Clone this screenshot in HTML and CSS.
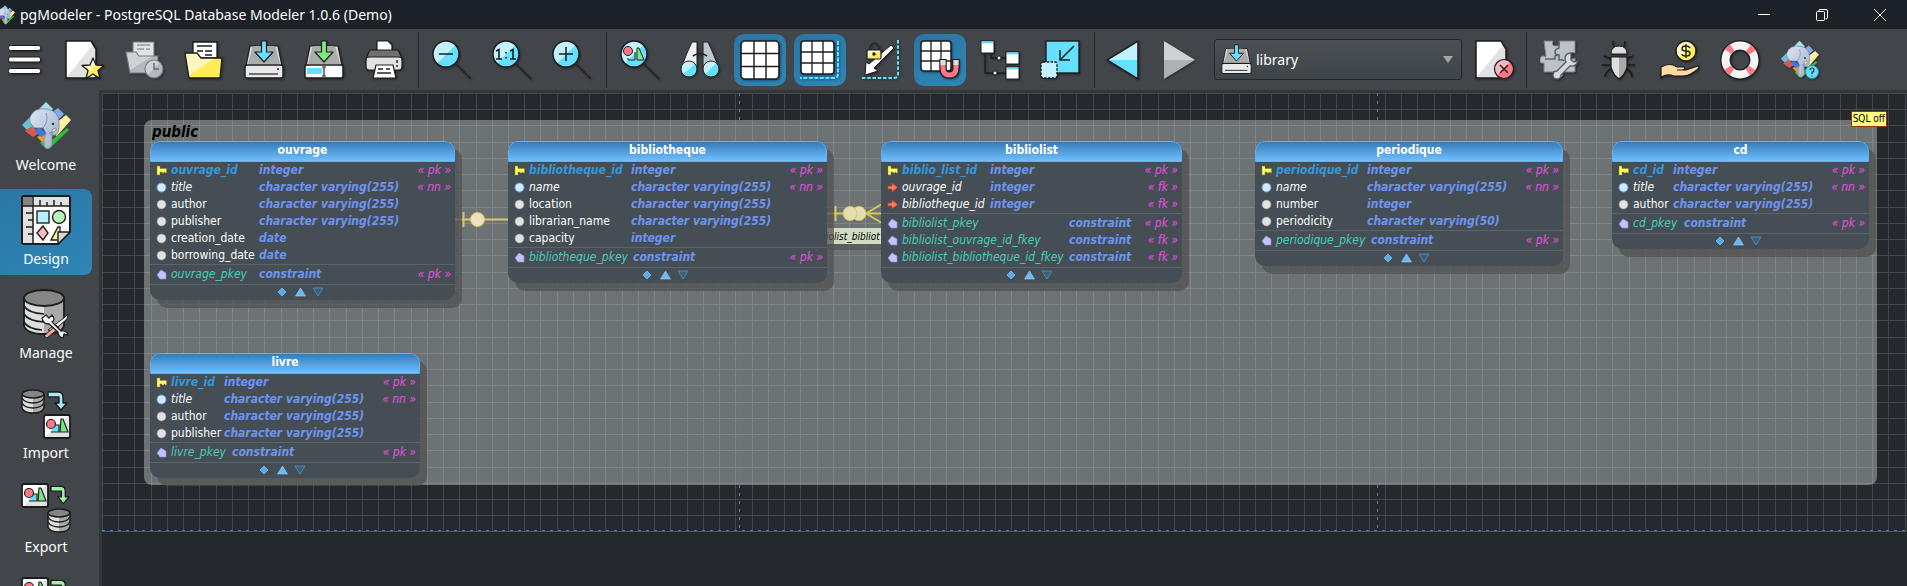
FILE: index.html
```html
<!DOCTYPE html>
<html lang="en">
<head>
<meta charset="utf-8">
<title>pgModeler - PostgreSQL Database Modeler 1.0.6 (Demo)</title>
<link rel="stylesheet" href="styles.css">
</head>
<body>
<svg class="defs" aria-hidden="true">
  <defs>
    <linearGradient id="g-paper" x1="0" y1="0" x2="1" y2="1"><stop offset=".5" stop-color="#fff"/><stop offset=".5" stop-color="#e2e2e2"/></linearGradient>
    <linearGradient id="g-yellow" x1="0" y1="0" x2="1" y2="1"><stop offset=".5" stop-color="#fff6bd"/><stop offset=".5" stop-color="#ffec57"/></linearGradient>
    <linearGradient id="g-cyan" x1="0" y1="0" x2="1" y2="1"><stop offset=".5" stop-color="#c2f2ff"/><stop offset=".5" stop-color="#66e0ff"/></linearGradient>
    <linearGradient id="g-gray" x1="0" y1="0" x2="1" y2="1"><stop offset=".5" stop-color="#cdd2d6"/><stop offset=".5" stop-color="#b4b9bd"/></linearGradient>
    <linearGradient id="g-pink" x1="0" y1="0" x2="1" y2="1"><stop offset=".5" stop-color="#ffb5bd"/><stop offset=".5" stop-color="#ff7886"/></linearGradient>
    <linearGradient id="g-cyl" x1="0" x2="1" y1="0" y2="0"><stop offset=".5" stop-color="#dedede"/><stop offset=".5" stop-color="#a9a9a9"/></linearGradient>
    <linearGradient id="g-head" x1="0" y1="0" x2="1" y2="1"><stop offset="0" stop-color="#dce6f4"/><stop offset="1" stop-color="#9fadc8"/></linearGradient>

    <symbol id="i-menu" viewBox="0 0 40 40"><g fill="#fff" stroke="#1c1c1c"><rect x="3.500" y="5.500" width="32" height="5" rx="2"/><rect x="3.500" y="17" width="32" height="5" rx="2"/><rect x="3.500" y="28.500" width="32" height="5" rx="2"/></g></symbol>
    <symbol id="i-new" viewBox="0 0 40 40"><path d="M2 1h25l5 8v29H2z" fill="url(#g-paper)" stroke="#1c1c1c" stroke-width="1.500"/><path d="M29 18l3 7 8 .5-6 5 2 8-7-4.500-7 4.500 2-8-6-5 8-.5z" fill="url(#g-yellow)" stroke="#1c1c1c" stroke-width="1.300" stroke-linejoin="round"/></symbol>
    <symbol id="i-recent" viewBox="0 0 40 40"><g stroke="#777c80" stroke-width="1.200"><path d="M9 16V2h21v16z" fill="#dfe3e6"/><path d="M13 5h13M13 9h7M22 9h4" stroke="#70767a" fill="none"/><path d="M2 12h10l3 4h19l-1 17H6z" fill="url(#g-gray)"/><circle cx="30" cy="29" r="9" fill="url(#g-gray)"/><path d="M30 23v6h5" fill="none" stroke="#666c70" stroke-width="1.500"/></g></symbol>
    <symbol id="i-open" viewBox="0 0 40 40"><g stroke="#1c1c1c" stroke-width="1.300"><path d="M9 18V2h24v16z" fill="#fff"/><path d="M13 6h15M13 11h6M21 11h7M21 15h7" fill="none"/><path d="M1 13h12l4 5h21l-2 20H5z" fill="url(#g-yellow)"/></g></symbol>
    <symbol id="i-drive" viewBox="0 0 40 40"><path d="M6 6h28l4 20H2z" fill="#d9d9d9" stroke="#1c1c1c" stroke-width="1.200"/><path d="M8 9q0-3 3-3h17q3 0 4 3l4 15H4z" fill="#ababab"/><rect x="1" y="25" width="38" height="13" rx="2" fill="#e9e9e9" stroke="#1c1c1c" stroke-width="1.400"/></symbol>
    <symbol id="i-save" viewBox="0 0 40 40"><use href="#i-drive"/><path d="M5 34h29" stroke="#222" stroke-width="1.200"/><circle cx="34" cy="29" r="1" fill="#222"/><path d="M17.500 1h5v11h6.500L20 22l-9-10h6.500z" fill="#66e0ff" stroke="#1c1c1c" stroke-width="1.200" stroke-linejoin="round"/></symbol>
    <symbol id="i-saveas" viewBox="0 0 40 40"><use href="#i-drive"/><rect x="2" y="26" width="36" height="11" rx="1" fill="#fff"/><rect x="3" y="28" width="15" height="6" fill="#66e0ff"/><path d="M18 27h4M20 27v9M18 36h4" stroke="#222" stroke-width="1.200"/><path d="M17.500 1h5v11h6.500L20 22l-9-10h6.500z" fill="#79eb7c" stroke="#1c1c1c" stroke-width="1.200" stroke-linejoin="round"/></symbol>
    <symbol id="i-print" viewBox="0 0 40 40"><g stroke="#1c1c1c" stroke-width="1.200"><path d="M13 14V1h11l4 4v9z" fill="#fff"/><path d="M6 10h28l4 8H2z" fill="#6f6f6f"/><rect x="2" y="17" width="36" height="13" rx="3" fill="#e2e2e2"/><path d="M12 25h17l3 13H9z" fill="#fff"/></g><path d="M14 29h5M22 29h4M13 33h14M33 20v3M33 25v2" stroke="#222" stroke-width="1.400"/></symbol>
    <symbol id="i-lens" viewBox="0 0 40 40"><path d="M23 23l16 16" stroke="#222" stroke-width="1.600"/><circle cx="14" cy="14" r="13" fill="url(#g-cyan)" stroke="#1c1c1c" stroke-width="1.400"/></symbol>
    <symbol id="i-zoomout" viewBox="0 0 40 40"><use href="#i-lens"/><path d="M7 14h14" stroke="#1c1c1c" stroke-width="1.500"/></symbol>
    <symbol id="i-zoom1" viewBox="0 0 40 40"><use href="#i-lens"/><path d="M4 11l3-1.500V19M4 19h6M18 11l3-1.500V19M18 19h6M14 12v1.500M14 17v1.500" fill="none" stroke="#1c1c1c" stroke-width="1.600"/></symbol>
    <symbol id="i-zoomin" viewBox="0 0 40 40"><use href="#i-lens"/><path d="M7 14h14M14 7v14" stroke="#1c1c1c" stroke-width="1.500"/></symbol>
    <symbol id="i-find" viewBox="0 0 40 40"><use href="#i-lens"/><circle cx="8" cy="11" r="4.500" fill="#ff7886" stroke="#222"/><path d="M8 18v2h7v-8" fill="none" stroke="#222"/><path d="M17 8h2l5 12h-7z" fill="#7aeb80" stroke="#222"/></symbol>
    <symbol id="i-binoc" viewBox="0 0 40 40"><path d="M12 2h5v24H2q5-14 10-24z" fill="#eef1f5" stroke="#222"/><path d="M28 2h-5v24h15Q33 12 28 2z" fill="#bcc7cf" stroke="#222"/><path d="M13 16q7-5 14 0" fill="none" stroke="#222" stroke-width="1.600"/><circle cx="9" cy="29" r="8" fill="url(#g-cyan)" stroke="#222"/><circle cx="31" cy="29" r="8" fill="url(#g-cyan)" stroke="#222"/></symbol>
    <symbol id="i-grid" viewBox="0 0 40 40"><rect x="1" y="1" width="38" height="38" rx="4" fill="#fff" stroke="#1c1c1c" stroke-width="1.600"/><path d="M14 1v38M26 1v38M1 13.500h38M1 26.500h38" stroke="#1c1c1c" stroke-width="1.400"/></symbol>
    <symbol id="i-limits" viewBox="0 0 40 40"><rect x="1" y="1" width="33" height="33" rx="3" fill="#fff" stroke="#1c1c1c" stroke-width="1.600"/><path d="M12 1v33M23 1v33M1 12h33M1 23h33" stroke="#1c1c1c" stroke-width="1.300"/><path d="M38 1v33q0 4-4 4H0" fill="none" stroke="#66e0ff" stroke-width="2" stroke-dasharray="4 1.500"/></symbol>
    <symbol id="i-lock" viewBox="0 0 40 40"><path d="M38 0v34q0 4-4 4H1" fill="none" stroke="#66e0ff" stroke-width="2" stroke-dasharray="3.500 1.800"/><path d="M31 5l3 3-20 20 4 3-13 4 1-13 3 2z" fill="#fff" stroke="#1c1c1c"/><path d="M10 11V7q4-8 9 0v4" fill="none" stroke="#2a2a2a" stroke-width="1.600"/><rect x="7" y="10" width="14" height="9" rx="1" fill="url(#g-yellow)" stroke="#1c1c1c" stroke-width="1.200"/><circle cx="14" cy="14" r="1.800" fill="#222"/></symbol>
    <symbol id="i-magnet" viewBox="0 0 40 40"><rect x="1" y="1" width="30" height="30" rx="3" fill="#fff" stroke="#1c1c1c" stroke-width="1.500"/><path d="M11 1v30M21 1v30M1 11h30M1 21h30" stroke="#1c1c1c" stroke-width="1.300"/><path d="M23 19v9q0 7 6.500 7t6.500-7v-9" fill="none" stroke="#1c1c1c" stroke-width="7.500"/><path d="M23 20v8q0 7 6.500 7t6.500-7v-8" fill="none" stroke="#ff7886" stroke-width="5"/><path d="M23 20v5M36 20v5" stroke="#ddd" stroke-width="5"/></symbol>
    <symbol id="i-tree" viewBox="0 0 40 40"><path d="M5 12v21h22M11 12v6h16" fill="none" stroke="#1c1c1c" stroke-width="1.300"/><g fill="#fff" stroke="#1c1c1c"><rect x="1" y="1" width="13" height="12"/><rect x="26" y="12" width="13" height="12"/><rect x="26" y="27" width="13" height="12"/><circle cx="19" cy="18" r="2"/><circle cx="15" cy="33" r="2"/></g><path d="M2 2.500h11M27 13.500h11M27 28.500h11" stroke="#66e0ff" stroke-width="2"/></symbol>
    <symbol id="i-fit" viewBox="0 0 40 40"><rect x="6" y="1" width="33" height="32" fill="#66e0ff" stroke="#1c1c1c" stroke-width="1.400"/><rect x="1" y="22" width="16" height="16" rx="2" fill="#c2f2ff" stroke="#1c1c1c" stroke-width="1.400" stroke-dasharray="2.500 1.300"/><path d="M34 6L20 20M20 10v10h10" fill="none" stroke="#1c1c1c" stroke-width="1.500"/></symbol>
    <symbol id="i-back" viewBox="0 0 40 40"><path d="M1 20L32 1v38z" fill="#66e0ff"/><path d="M1 20L32 1v19z" fill="#c2f2ff"/><path d="M1 20L32 1v38z" fill="none" stroke="#222" stroke-width="1.600" stroke-linejoin="round"/></symbol>
    <symbol id="i-forward" viewBox="0 0 40 40"><path d="M2 1l31 19H2z" fill="#cfd1d4"/><path d="M2 39l31-19H2z" fill="#aeb1b4"/></symbol>
    <symbol id="i-closedoc" viewBox="0 0 40 40"><path d="M2 1h25l5 8v29H2z" fill="url(#g-paper)" stroke="#1c1c1c" stroke-width="1.500"/><circle cx="30" cy="29" r="9.500" fill="url(#g-pink)" stroke="#1c1c1c" stroke-width="1.200"/><path d="M26 25l8 8M34 25l-8 8" stroke="#1c1c1c" stroke-width="1.500"/></symbol>
    <symbol id="i-plugin" viewBox="0 0 40 40"><path d="M4 1h9q-2 5 3 5t3-5h16v12q-5-2-5 3t5 2v14H22q2 5-3 5t-4-5H4v-9q-5 1-4-4t6-2z" fill="#bcc2c7" stroke="#7d8286"/><path d="M19 1v7q-4 1-4 4t4 3v5q4-1 5 1M5 19h10q-1-4 3-4" fill="none" stroke="#5b6166" stroke-width="1.500"/><path d="M31 13q-6 0-6 6 0 2 1 3l-9 9q-4 0-4 4t4 4 4-4l9-9q6 1 8-5l-4 1-3-2v-3z" fill="#d6dade" stroke="#555b60" stroke-width="1.300"/></symbol>
    <symbol id="i-bug" viewBox="0 0 40 40"><g fill="none" stroke="#1c1c1c" stroke-width="1.600"><path d="M13 1q0 7 4 7M25 1q0 7-4 7M11 19L4 16M11 25H2M11 29q-5 2-6 8M26 19l7-3M26 25h9M26 29q6 2 6 8"/></g><path d="M11 14q0-8 8-8t8 8z" fill="#ddd" stroke="#1c1c1c"/><path d="M11 17h16v10q-2 8-8 12-6-4-8-12z" fill="url(#g-cyl)" stroke="#1c1c1c" stroke-width="1.200"/></symbol>
    <symbol id="i-donate" viewBox="0 0 40 40"><circle cx="26" cy="11" r="10" fill="url(#g-yellow)" stroke="#1c1c1c" stroke-width="1.300"/><path d="M30 8q-1-2-4-2-4 0-4 2.500t4 2.500 4 2.500-4 2.500-4-2M26 4v14" fill="none" stroke="#1c1c1c" stroke-width="1.400"/><path d="M1 27q9-5 16 0h7q2 2-1 3h-6 9l12-4q2 1 0 3-8 7-15 7h-9q-8-3-13 2z" fill="#ffdca3" stroke="#1c1c1c" stroke-width="1.200"/></symbol>
    <symbol id="i-buoy" viewBox="0 0 40 40"><circle cx="20" cy="20" r="14.500" fill="none" stroke="#1c1c1c" stroke-width="10.500"/><circle cx="20" cy="20" r="14.500" fill="none" stroke="#f4f4f4" stroke-width="8"/><circle cx="20" cy="20" r="14.500" fill="none" stroke="#ff7886" stroke-width="8" stroke-dasharray="6 16.780" stroke-dashoffset="-8.400"/></symbol>
    <symbol id="i-logo" viewBox="-1 -1 50 50"><path d="M24 0l7 7-7 7-7-7z" fill="#a5e0ea"/><path d="M36 6l6 6-6 6-7-7z" fill="#85a9ef"/><path d="M44 13l5 5-14 16-10-6z" fill="#fcf1a2"/><path d="M7 16l8 8-8 6-7-7z" fill="#65c1d6"/><path d="M10 24l7 7-6 4-8-6z" fill="#da594e"/><path d="M45 26l2 2-20 19h-3l-6-6 3-3 5 3z" fill="#31bd39"/><path d="M22 31l7 7-8 3-6-6z" fill="#f19a22"/><path d="M18 26l7 6-6 3-7-7z" fill="#397ae6"/><path d="M8 15Q12 5 25 7q12 2 12 14 1 10-4 12-4 1-6-2l3-1q5 0 4-4-4 0-4 3l0 14q-4 7-8 1-1-7 2-13l-3-5h-8q-7-5-5-11z" fill="url(#g-head)" stroke="#7384a5" stroke-width=".8"/><path d="M24 11q3 8-3 15" fill="none" stroke="#8494b4"/><circle cx="31" cy="22" r="1.200" fill="#333"/></symbol>
    <symbol id="i-help" viewBox="0 0 40 40"><use href="#i-logo" width="39" height="39"/><circle cx="32" cy="32" r="6.500" fill="#66e0ff" stroke="#3b88a0"/><path d="M30 30q0-2 2-2t2 2-2 2v2M32 35.500v1" fill="none" stroke="#234" stroke-width="1.200"/></symbol>
    <symbol id="i-design" viewBox="0 0 50 50"><path d="M3 1h44q2 0 2 2v34L37 49H3q-2 0-2-2V3q0-2 2-2z" fill="#fff" stroke="#1c1c1c" stroke-width="2"/><path d="M2 2h46v9H12v37H2z" fill="#e0e0e0"/><rect x="2" y="2" width="9" height="9" fill="#858585"/><path d="M2 11h46M12 2v46M19 11V5M26 11V7M33 11V5M40 11V7M12 18H5M12 25H7M12 32H5M12 39H7" stroke="#1c1c1c" stroke-width="1.500"/><rect x="16" y="16" width="12" height="12" fill="#b7efff" stroke="#222" stroke-width="1.400"/><circle cx="38" cy="22" r="6.500" fill="#baf4b9" stroke="#222" stroke-width="1.400"/><path d="M22 31l5 7-5 7-6-7z" fill="#ffb9c3" stroke="#222" stroke-width="1.400"/><path d="M30 45l7-13h2v13z" fill="#fff09a" stroke="#222" stroke-width="1.400"/><path d="M37 49V37h12z" fill="#d8d8d8" stroke="#222" stroke-width="1.400"/></symbol>
    <symbol id="i-manage" viewBox="0 0 50 50"><path d="M3 9v28q3 8 20 8t20-8V9z" fill="url(#g-cyl)" stroke="#1c1c1c" stroke-width="1.800"/><ellipse cx="23" cy="9" rx="20" ry="8" fill="#858585" stroke="#1c1c1c" stroke-width="1.800"/><path d="M3 17q4 7 20 8M3 25q4 7 20 8M3 33q4 7 18 8" fill="none" stroke="#1c1c1c" stroke-width="1.600"/><path d="M44 28l3-3-1 5-14 12-5-1z" fill="#eee" stroke="#222"/><path d="M35 36l3 3-12 10-3-2z" fill="#ff9ba6" stroke="#222"/><path d="M25 26l3 3 3-3q4 5 0 7l9 9q6-1 7 4l-4-1-1 4q-5-1-5-6l-9-8q-6 0-7-6z" fill="#f4f4f4" stroke="#222" stroke-width="1.300"/></symbol>
    <symbol id="i-db" viewBox="0 0 24 25"><path d="M1 5v14q2 5 11 5t11-5V5z" fill="url(#g-cyl)" stroke="#1c1c1c" stroke-width="1.500"/><ellipse cx="12" cy="5" rx="11" ry="4" fill="#858585" stroke="#1c1c1c" stroke-width="1.500"/><path d="M1 9q3 5 11 5t11-5M1 14q3 5 11 5t11-5" fill="none" stroke="#1c1c1c" stroke-width="1.400"/></symbol>
    <symbol id="i-model" viewBox="0 0 28 25"><rect x="1" y="1" width="26" height="23" rx="2" fill="url(#g-paper)" stroke="#1c1c1c" stroke-width="1.800"/><path d="M8 18h8v-7h-5" fill="#66e0ff" stroke="#222" stroke-width="1.200"/><circle cx="8" cy="10" r="4.500" fill="#ff7886" stroke="#222" stroke-width="1.200"/><path d="M18 5h2l5 13h-8z" fill="#75e780" stroke="#222" stroke-width="1.200"/></symbol>
    <symbol id="i-turn" viewBox="0 0 22 21"><path d="M1 2h10q5 0 5 5v6h4l-6 7-6-7h4V7H1z" stroke="#1c1c1c" stroke-width="1.400" stroke-linejoin="round"/></symbol>
    <symbol id="i-import" viewBox="0 0 50 50"><use href="#i-db" x="0" y="0" width="24" height="25"/><use href="#i-turn" x="26" y="1" width="22" height="21" fill="#a9e8fa"/><use href="#i-model" x="22" y="25" width="28" height="25"/></symbol>
    <symbol id="i-export" viewBox="0 0 50 50"><use href="#i-model" x="0" y="0" width="28" height="25"/><use href="#i-turn" x="29" y="1" width="21" height="21" fill="#a4f0a5"/><use href="#i-db" x="26" y="25" width="24" height="25"/></symbol>

    <symbol id="c-pk" viewBox="0 0 11 11"><path d="M1 1h3v2.500h6.500V8H9V7H8v1H6V7H4v3H1z" fill="#ffff70" stroke="#8b7b14" stroke-width=".5"/></symbol>
    <symbol id="c-nn" viewBox="0 0 11 11"><circle cx="5.500" cy="5.500" r="4.500" fill="#d5e9ff" stroke="#5fa3e6"/></symbol>
    <symbol id="c-col" viewBox="0 0 11 11"><circle cx="5.500" cy="5.500" r="4.500" fill="#e2e2e2" stroke="#8f8f8f" stroke-width=".6"/></symbol>
    <symbol id="c-fk" viewBox="0 0 11 11"><path d="M1 4h4V1l5.500 4.500L5 10V7H1z" fill="#ff7c5c" stroke="#c43b22" stroke-width=".7"/></symbol>
    <symbol id="c-con" viewBox="0 0 11 11"><path d="M1 6l4-5 5 3v6H4z" fill="#c5c3ff" stroke="#8e8bd8" stroke-width=".7"/></symbol>
    <symbol id="c-nav" viewBox="0 0 46 10"><path d="M5 1l4 4-4 4-4-4z" fill="#56abea" stroke="#9cd0fa" stroke-width=".6"/><path d="M23.500 1l5 8h-10z" fill="#69b9f5" stroke="#9cd0fa" stroke-width=".6"/><path d="M36 1h10l-5 8z" fill="#3a607d" stroke="#4f87b0"/></symbol>
  </defs>
</svg>

<header class="titlebar">
  <svg class="titlebar-logo"><use href="#i-logo"/></svg>
  <h1 class="titlebar-text">pgModeler - PostgreSQL Database Modeler 1.0.6 (Demo)</h1>
  <div class="window-controls">
    <button class="window-button" aria-label="Minimize"><svg viewBox="0 0 14 14"><path d="M1 6.500h12"/></svg></button>
    <button class="window-button" aria-label="Restore"><svg viewBox="0 0 14 14"><rect x="1.500" y="3.500" width="8" height="9" rx="1"/><path d="M4 3V2q0-.5.500-.5H11q1.500 0 1.500 1.500v7q0 1-2 1"/></svg></button>
    <button class="window-button" aria-label="Close"><svg viewBox="0 0 14 14"><path d="M1 1l12 12M13 1L1 13"/></svg></button>
  </div>
</header>

<nav class="toolbar" aria-label="Main toolbar">
  <button class="tool tool-menu" aria-label="Menu"><svg><use href="#i-menu"/></svg></button>
  <button class="tool" aria-label="New model"><svg><use href="#i-new"/></svg></button>
  <button class="tool" aria-label="Recent models"><svg><use href="#i-recent"/></svg></button>
  <button class="tool" aria-label="Open"><svg><use href="#i-open"/></svg></button>
  <button class="tool" aria-label="Save"><svg><use href="#i-save"/></svg></button>
  <button class="tool" aria-label="Save as"><svg><use href="#i-saveas"/></svg></button>
  <button class="tool" aria-label="Print"><svg><use href="#i-print"/></svg></button>
  <span class="separator"></span>
  <button class="tool" aria-label="Zoom out"><svg><use href="#i-zoomout"/></svg></button>
  <button class="tool" aria-label="Normal zoom"><svg><use href="#i-zoom1"/></svg></button>
  <button class="tool" aria-label="Zoom in"><svg><use href="#i-zoomin"/></svg></button>
  <span class="separator"></span>
  <button class="tool" aria-label="Overview"><svg><use href="#i-find"/></svg></button>
  <button class="tool" aria-label="Find object"><svg><use href="#i-binoc"/></svg></button>
  <button class="tool is-active" aria-label="Show grid"><svg><use href="#i-grid"/></svg></button>
  <button class="tool is-active" aria-label="Show delimiters"><svg><use href="#i-limits"/></svg></button>
  <button class="tool" aria-label="Lock delimiter"><svg><use href="#i-lock"/></svg></button>
  <button class="tool is-active" aria-label="Align to grid"><svg><use href="#i-magnet"/></svg></button>
  <button class="tool" aria-label="Arrange objects"><svg><use href="#i-tree"/></svg></button>
  <button class="tool" aria-label="Compact view"><svg><use href="#i-fit"/></svg></button>
  <span class="separator"></span>
  <button class="tool tool-narrow" aria-label="Previous model"><svg><use href="#i-back"/></svg></button>
  <button class="tool tool-narrow" aria-label="Next model"><svg><use href="#i-forward"/></svg></button>
  <div class="model-picker">
    <svg class="model-icon"><use href="#i-save"/></svg>
    <select class="model-select" aria-label="Current model"><option>library</option></select>
    <svg class="model-arrow" viewBox="0 0 10 7"><path d="M0 0h10L5 7z"/></svg>
  </div>
  <button class="tool tool-narrow" aria-label="Close model"><svg><use href="#i-closedoc"/></svg></button>
  <span class="separator"></span>
  <button class="tool" aria-label="Plug-ins"><svg><use href="#i-plugin"/></svg></button>
  <button class="tool" aria-label="Report a bug"><svg><use href="#i-bug"/></svg></button>
  <button class="tool" aria-label="Donate"><svg><use href="#i-donate"/></svg></button>
  <button class="tool" aria-label="Support"><svg><use href="#i-buoy"/></svg></button>
  <button class="tool" aria-label="About"><svg><use href="#i-help"/></svg></button>
</nav>

<div class="workspace">
  <nav class="sidebar" aria-label="Views">
    <button class="view"><svg><use href="#i-logo"/></svg>Welcome</button>
    <button class="view is-active"><svg><use href="#i-design"/></svg>Design</button>
    <button class="view"><svg><use href="#i-manage"/></svg>Manage</button>
    <hr class="sidebar-rule">
    <button class="view"><svg><use href="#i-import"/></svg>Import</button>
    <button class="view"><svg><use href="#i-export"/></svg>Export</button>
    <button class="view" aria-label="Diff"><svg><use href="#i-export"/></svg></button>
  </nav>

  <main class="canvas">
    <svg class="grid" aria-hidden="true"><path id="grid-lines" class="grid-line"/></svg>
    <section class="schema" aria-label="public"><h2 class="schema-name">public</h2></section>
    <svg class="links" aria-hidden="true">
      <path class="page-line" d="M637.500 0V438M1275.500 0V438M0 437.500H1900"/>
      <path class="limit-line" d="M0 438.500H1900"/>
      <g class="link"><path d="M353 126.500H406M361.500 119v15"/><circle cx="375.500" cy="126.500" r="7"/></g>
      <g class="link link-alt"><path d="M725 120.500H780M733.500 113v15M764 120.500l15-9M764 120.500l15 9"/><circle cx="757" cy="120.500" r="7"/><circle cx="748" cy="120.500" r="7"/></g>
    </svg>
    <span class="link-label">iolist_bibliot</span>

    <article class="node node-ouvrage">
      <h3>ouvrage</h3>
      <table class="cols">
        <tr class="pk"><td><svg><use href="#c-pk"/></svg></td><th>ouvrage_id</th><td>integer</td><td>« pk »</td></tr>
        <tr class="nn"><td><svg><use href="#c-nn"/></svg></td><th>title</th><td>character varying(255)</td><td>« nn »</td></tr>
        <tr><td><svg><use href="#c-col"/></svg></td><th>author</th><td>character varying(255)</td><td></td></tr>
        <tr><td><svg><use href="#c-col"/></svg></td><th>publisher</th><td>character varying(255)</td><td></td></tr>
        <tr><td><svg><use href="#c-col"/></svg></td><th>creation_date</th><td>date</td><td></td></tr>
        <tr><td><svg><use href="#c-col"/></svg></td><th>borrowing_date</th><td>date</td><td></td></tr>
      </table>
      <table class="cons">
        <tr><td><svg><use href="#c-con"/></svg></td><th>ouvrage_pkey</th><td>constraint</td><td>« pk »</td></tr>
      </table>
      <footer><svg><use href="#c-nav"/></svg></footer>
    </article>

    <article class="node node-bibliotheque">
      <h3>bibliotheque</h3>
      <table class="cols">
        <tr class="pk"><td><svg><use href="#c-pk"/></svg></td><th>bibliotheque_id</th><td>integer</td><td>« pk »</td></tr>
        <tr class="nn"><td><svg><use href="#c-nn"/></svg></td><th>name</th><td>character varying(255)</td><td>« nn »</td></tr>
        <tr><td><svg><use href="#c-col"/></svg></td><th>location</th><td>character varying(255)</td><td></td></tr>
        <tr><td><svg><use href="#c-col"/></svg></td><th>librarian_name</th><td>character varying(255)</td><td></td></tr>
        <tr><td><svg><use href="#c-col"/></svg></td><th>capacity</th><td>integer</td><td></td></tr>
      </table>
      <table class="cons">
        <tr><td><svg><use href="#c-con"/></svg></td><th>bibliotheque_pkey</th><td>constraint</td><td>« pk »</td></tr>
      </table>
      <footer><svg><use href="#c-nav"/></svg></footer>
    </article>

    <article class="node node-bibliolist">
      <h3>bibliolist</h3>
      <table class="cols">
        <tr class="pk"><td><svg><use href="#c-pk"/></svg></td><th>biblio_list_id</th><td>integer</td><td>« pk »</td></tr>
        <tr class="fk"><td><svg><use href="#c-fk"/></svg></td><th>ouvrage_id</th><td>integer</td><td>« fk »</td></tr>
        <tr class="fk"><td><svg><use href="#c-fk"/></svg></td><th>bibliotheque_id</th><td>integer</td><td>« fk »</td></tr>
      </table>
      <table class="cons">
        <tr><td><svg><use href="#c-con"/></svg></td><th>bibliolist_pkey</th><td>constraint</td><td>« pk »</td></tr>
        <tr><td><svg><use href="#c-con"/></svg></td><th>bibliolist_ouvrage_id_fkey</th><td>constraint</td><td>« fk »</td></tr>
        <tr><td><svg><use href="#c-con"/></svg></td><th>bibliolist_bibliotheque_id_fkey</th><td>constraint</td><td>« fk »</td></tr>
      </table>
      <footer><svg><use href="#c-nav"/></svg></footer>
    </article>

    <article class="node node-periodique">
      <h3>periodique</h3>
      <table class="cols">
        <tr class="pk"><td><svg><use href="#c-pk"/></svg></td><th>periodique_id</th><td>integer</td><td>« pk »</td></tr>
        <tr class="nn"><td><svg><use href="#c-nn"/></svg></td><th>name</th><td>character varying(255)</td><td>« nn »</td></tr>
        <tr><td><svg><use href="#c-col"/></svg></td><th>number</th><td>integer</td><td></td></tr>
        <tr><td><svg><use href="#c-col"/></svg></td><th>periodicity</th><td>character varying(50)</td><td></td></tr>
      </table>
      <table class="cons">
        <tr><td><svg><use href="#c-con"/></svg></td><th>periodique_pkey</th><td>constraint</td><td>« pk »</td></tr>
      </table>
      <footer><svg><use href="#c-nav"/></svg></footer>
    </article>

    <article class="node node-cd">
      <h3>cd</h3>
      <table class="cols">
        <tr class="pk"><td><svg><use href="#c-pk"/></svg></td><th>cd_id</th><td>integer</td><td>« pk »</td></tr>
        <tr class="nn"><td><svg><use href="#c-nn"/></svg></td><th>title</th><td>character varying(255)</td><td>« nn »</td></tr>
        <tr><td><svg><use href="#c-col"/></svg></td><th>author</th><td>character varying(255)</td><td></td></tr>
      </table>
      <table class="cons">
        <tr><td><svg><use href="#c-con"/></svg></td><th>cd_pkey</th><td>constraint</td><td>« pk »</td></tr>
      </table>
      <footer><svg><use href="#c-nav"/></svg></footer>
    </article>

    <article class="node node-livre">
      <h3>livre</h3>
      <table class="cols">
        <tr class="pk"><td><svg><use href="#c-pk"/></svg></td><th>livre_id</th><td>integer</td><td>« pk »</td></tr>
        <tr class="nn"><td><svg><use href="#c-nn"/></svg></td><th>title</th><td>character varying(255)</td><td>« nn »</td></tr>
        <tr><td><svg><use href="#c-col"/></svg></td><th>author</th><td>character varying(255)</td><td></td></tr>
        <tr><td><svg><use href="#c-col"/></svg></td><th>publisher</th><td>character varying(255)</td><td></td></tr>
      </table>
      <table class="cons">
        <tr><td><svg><use href="#c-con"/></svg></td><th>livre_pkey</th><td>constraint</td><td>« pk »</td></tr>
      </table>
      <footer><svg><use href="#c-nav"/></svg></footer>
    </article>

    <span class="sql-badge">SQL off</span>
  </main>
</div>
<script src="grid.js"></script>
</body>
</html>
```

FILE: styles.css
```css
* { box-sizing: border-box; }

body {
  margin: 0;
  height: 100vh;
  display: flex;
  flex-direction: column;
  overflow: hidden;
  background: #424549;
  color: #fff;
  font-family: "Noto Sans", "Open Sans", sans-serif;
}

button {
  border: 0;
  padding: 0;
  background: none;
  color: inherit;
  font: inherit;
}

.defs { position: absolute; width: 0; height: 0; }

/* Title bar */
.titlebar {
  flex: none;
  display: flex;
  align-items: center;
  height: 29px;
  background: #1c2227;
}
.titlebar-logo { width: 20px; height: 20px; margin-left: -5px; }
.titlebar-text { margin: 0 0 0 5px; font-size: 14px; line-height: 20px; font-weight: 400; }
.window-controls { display: flex; gap: 4px; margin-left: auto; }
.window-button { display: grid; place-items: center; width: 54px; height: 29px; }
.window-button svg { width: 14px; height: 14px; fill: none; stroke: #fff; }

/* Toolbar */
.toolbar {
  flex: none;
  display: flex;
  align-items: center;
  gap: 8px;
  height: 61px;
}
.tool {
  flex: none;
  display: grid;
  place-items: center;
  width: 52px;
  height: 52px;
  border-radius: 10px;
}
.tool svg { width: 40px; height: 40px; filter: drop-shadow(1px 1px 1px rgba(0, 0, 0, .4)); }
.tool-menu { width: 50px; }
.tool-narrow { width: 48px; }
.is-active { background: linear-gradient(150deg, #2a76a3, #2f86b6); }
.separator { flex: none; width: 1px; height: 56px; margin-right: -1px; background: #26292c; }

.model-picker { position: relative; flex: none; width: 248px; height: 41px; }
.model-select {
  appearance: none;
  width: 100%;
  height: 100%;
  padding: 0 28px 0 41px;
  border: 1px solid #25282b;
  border-radius: 3px;
  background: linear-gradient(#4b5055, #3f4449);
  color: #fff;
  font: 14px/20px "Noto Sans", "Open Sans", sans-serif;
}
.model-icon { position: absolute; left: 7px; top: 5px; width: 31px; height: 31px; }
.model-arrow { position: absolute; right: 9px; top: 17px; width: 10px; height: 7px; fill: #a5a8aa; }

/* Sidebar */
.workspace { flex: 1; display: flex; min-height: 0; }
.sidebar {
  flex: none;
  display: flex;
  flex-direction: column;
  gap: 8px;
  width: 99px;
  padding-top: 5px;
  overflow: hidden;
}
.view {
  flex: none;
  display: flex;
  flex-direction: column;
  align-items: center;
  gap: 4px;
  width: 92px;
  height: 86px;
  padding-top: 6px;
  border-radius: 0 8px 8px 0;
  font-size: 14px;
  line-height: 20px;
}
.view svg { width: 50px; height: 50px; }
.sidebar-rule { width: 97px; height: 1px; margin: 0 0 -2px; border: 0; background: #26292c; }

/* Canvas */
.canvas {
  position: relative;
  flex: 1;
  overflow: hidden;
  border: solid #333638;
  border-width: 3px 0 0 3px;
  background: #25282d;
  font-family: "DejaVu Sans Condensed", "DejaVu Sans", sans-serif;
  font-size: 12px;
  line-height: 17px;
}
.grid, .links { position: absolute; inset: 0; width: 100%; height: 100%; }
.grid-line { stroke: #43464b; shape-rendering: crispEdges; }
.page-line { fill: none; stroke: #6275b4; stroke-dasharray: 3 5; }
.limit-line { stroke: #e01818; }
.link { fill: #ebe2c0; stroke: #dfc568; stroke-width: 1; }
.link path { fill: none; stroke-width: 2; }
.link-alt { fill: #e3dfb4; stroke: #d5c95a; }

.schema {
  position: absolute;
  left: 42px;
  top: 27px;
  right: 30px;
  height: 365px;
  border-radius: 8px;
  background: rgba(243, 251, 250, .35);
}
.schema-name { margin: 2px 0 0 8px; color: #000; font-size: 15px; line-height: 20px; font-style: italic; }

.link-label {
  position: absolute;
  left: 723px;
  top: 135px;
  width: 60px;
  height: 16px;
  padding-left: 1px;
  background: #d1dcc2;
  box-shadow: 3px 6px 0 rgba(80, 80, 80, .6);
  color: #000;
  font-size: 10px;
  line-height: 17px;
  font-style: italic;
  white-space: nowrap;
}
.sql-badge {
  position: absolute;
  right: 20px;
  top: 18px;
  padding: 0 1px;
  border: 1px solid #983020;
  background: #ffff80;
  color: #000;
  font-size: 10px;
  line-height: 14px;
}

/* Database tables */
.node {
  position: absolute;
  border-radius: 10px;
  background: #464e55;
  box-shadow: 7px 8px 0 rgba(82, 82, 82, .75);
  white-space: nowrap;
}
.node h3 {
  height: 21px;
  margin: 0;
  border: 1px solid #5fb1f2;
  border-radius: 10px 10px 0 0;
  background: linear-gradient(#357bb8, #70bfff);
  font-size: 12px;
  line-height: 16px;
  text-align: center;
}
.node table { width: 100%; border-collapse: collapse; table-layout: fixed; }
.node tr { height: 17px; }
.node td, .node th { padding: 0; font-weight: 400; text-align: left; line-height: 17px; }
.node td:nth-child(1) { width: 21px; padding-left: 6px; }
.node td:nth-child(3) { color: #6d94f0; font-weight: 700; font-style: italic; }
.node td:nth-child(4) { width: 40px; padding-right: 4px; color: #e84fe0; font-style: italic; text-align: right; }
.node td svg { display: block; width: 11px; height: 11px; }
.node th { width: var(--name); }
.node .cons { display: block; padding: 1px 0; border-block: 1px solid #5b6268; }
.node .cons tbody { display: table; width: 100%; table-layout: fixed; }
.node .cons th { width: var(--constraint); color: #45cdb9; font-style: italic; }
.node .pk th { color: #3498db; font-weight: 700; font-style: italic; }
.node .nn th, .node .fk th { font-style: italic; }
.node footer { display: flex; justify-content: center; height: 15px; padding: 2px 6px 0 0; }
.node footer svg { width: 46px; height: 10px; }

.node-ouvrage { left: 48px; top: 48px; width: 305px; --name: 88px; --constraint: 88px; }
.node-bibliotheque { left: 406px; top: 48px; width: 319px; --name: 102px; --constraint: 104px; }
.node-bibliolist { left: 779px; top: 48px; width: 301px; --name: 88px; --constraint: 167px; }
.node-periodique { left: 1153px; top: 48px; width: 308px; --name: 91px; --constraint: 95px; }
.node-cd { left: 1510px; top: 48px; width: 257px; --name: 40px; --constraint: 51px; }
.node-livre { left: 48px; top: 260px; width: 270px; --name: 53px; --constraint: 61px; }
```

FILE: grid.js
```js
// Grid cells are 16.24px wide at the current zoom; lines snap to whole pixels.
const step = 16.24;
const pageHeight = 438;
const width = 4000;
let d = "";
for (let x = 0; x < width; x += step) {
  d += `M${Math.round(x) + 0.5} 0V${pageHeight}`;
}
for (let y = 0; y < pageHeight; y += step) {
  d += `M0 ${Math.round(y) + 0.5}H${width}`;
}
document.getElementById("grid-lines").setAttribute("d", d);
```
